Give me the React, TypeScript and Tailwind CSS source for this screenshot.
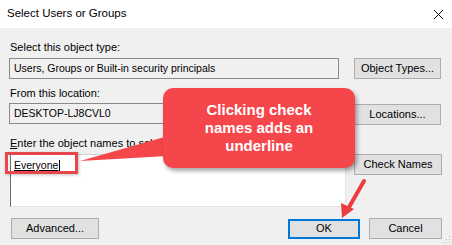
import React from "react";

const font = { fontFamily: '"Liberation Sans", Arial, sans-serif' };

const Btn = ({ label, className = "" }: { label: string; className?: string }) => (
  <button
    className={
      "h-[21px] bg-[#e1e1e1] border border-[#adadad] text-[11px] text-black flex items-center justify-center " +
      className
    }
  >
    {label}
  </button>
);

export default function App() {
  return (
    <div
      className="relative w-[452px] h-[245px] overflow-hidden bg-[#f0f0f0] text-black"
      style={font}
    >
      {/* title bar */}
      <div className="h-[28px] bg-white flex items-center justify-between pl-[7px] pr-[8px]">
        <span className="text-[11.5px]">Select Users or Groups</span>
        <svg width="11" height="11" viewBox="0 0 11 11">
          <path d="M1 1L10 10M10 1L1 10" stroke="#111" strokeWidth="1" />
        </svg>
      </div>

      <div className="pl-[9px] pt-[12px]">
        <div className="text-[11px] h-[14px] leading-[14px] pl-[1px]">Select this object type:</div>
        <div className="flex mt-[4px]">
          <div className="w-[330px] h-[21px] border border-[#8a8a8a] bg-[#f0f0f0] text-[10.5px] flex items-center pl-[4px]">
            Users, Groups or Built-in security principals
          </div>
          <Btn label="Object Types..." className="ml-[15px] w-[87px]" />
        </div>

        <div className="text-[11px] h-[14px] leading-[14px] pl-[1px] mt-[7px]">From this location:</div>
        <div className="flex mt-[3px]">
          <div className="w-[330px] h-[21px] border border-[#8a8a8a] bg-[#f0f0f0] text-[10.5px] flex items-center pl-[4px]">
            DESKTOP-LJ8CVL0
          </div>
          <Btn label="Locations..." className="ml-[15px] w-[87px] mt-[1px]" />
        </div>

        <div className="text-[11px] h-[14px] leading-[14px] pl-[1px] mt-[11px]">
          <span className="underline">E</span>nter the object names to select (examples):
        </div>
        <div className="flex mt-[4px]">
          <div className="w-[336px] h-[53px] ml-[1px] bg-white border border-[#e3e3e3] border-l-[#6d6d6d] border-t-[#d0d0d0] text-[10.5px] pl-[3px] pt-[3px]">
            <span className="underline">Everyone</span>
            <span className="inline-block w-[1px] h-[12px] bg-black align-middle ml-[1px]" />
          </div>
          <Btn label="Check Names" className="ml-[8px] w-[88px] h-[20px]" />
        </div>

        <div className="flex mt-[11px] items-center">
          <Btn label="Advanced..." className="ml-[2px] w-[88px] h-[20px]" />
          <button className="ml-[189px] w-[72px] h-[20px] bg-[#e1e1e1] border-2 border-[#0078d7] text-[11px] flex items-center justify-center">
            OK
          </button>
          <Btn label="Cancel" className="ml-[9px] w-[73px] h-[20px]" />
        </div>
      </div>

      {/* resize grip */}
      <svg className="absolute right-[1px] bottom-[1px]" width="8" height="8" viewBox="0 0 8 8">
        <rect x="6" y="0" width="1" height="1" fill="#bbb" />
        <rect x="3" y="3" width="1" height="1" fill="#bbb" />
        <rect x="6" y="3" width="1" height="1" fill="#bbb" />
        <rect x="0" y="6" width="1" height="1" fill="#bbb" />
        <rect x="3" y="6" width="1" height="1" fill="#bbb" />
        <rect x="6" y="6" width="1" height="1" fill="#bbb" />
      </svg>

      {/* highlight box */}
      <div className="absolute left-[5px] top-[152px] w-[73px] h-[22px] border-[3px] border-[#e8474c] shadow-[1px_1px_3px_rgba(0,0,0,0.25)]" />

      {/* callout tail and arrow */}
      <svg className="absolute left-0 top-0" width="452" height="245" viewBox="0 0 452 245">
        <polygon points="168,136 80,161 168,156" fill="#f5464b" />
        <line x1="364" y1="181" x2="348" y2="209" stroke="#ee3d42" strokeWidth="4" strokeLinecap="round" />
        <polygon points="342,218 341,203 354,209" fill="#ee3d42" />
      </svg>

      {/* callout */}
      <div className="absolute left-[163px] top-[88px] w-[192px] h-[80px] rounded-[10px] bg-[#f5464b] shadow-[2px_3px_4px_rgba(0,0,0,0.35)] flex items-center justify-center">
        <p className="text-white font-bold text-[15px] leading-[18px] text-center">
          Clicking check
          <br />
          names adds an
          <br />
          underline
        </p>
      </div>
    </div>
  );
}
